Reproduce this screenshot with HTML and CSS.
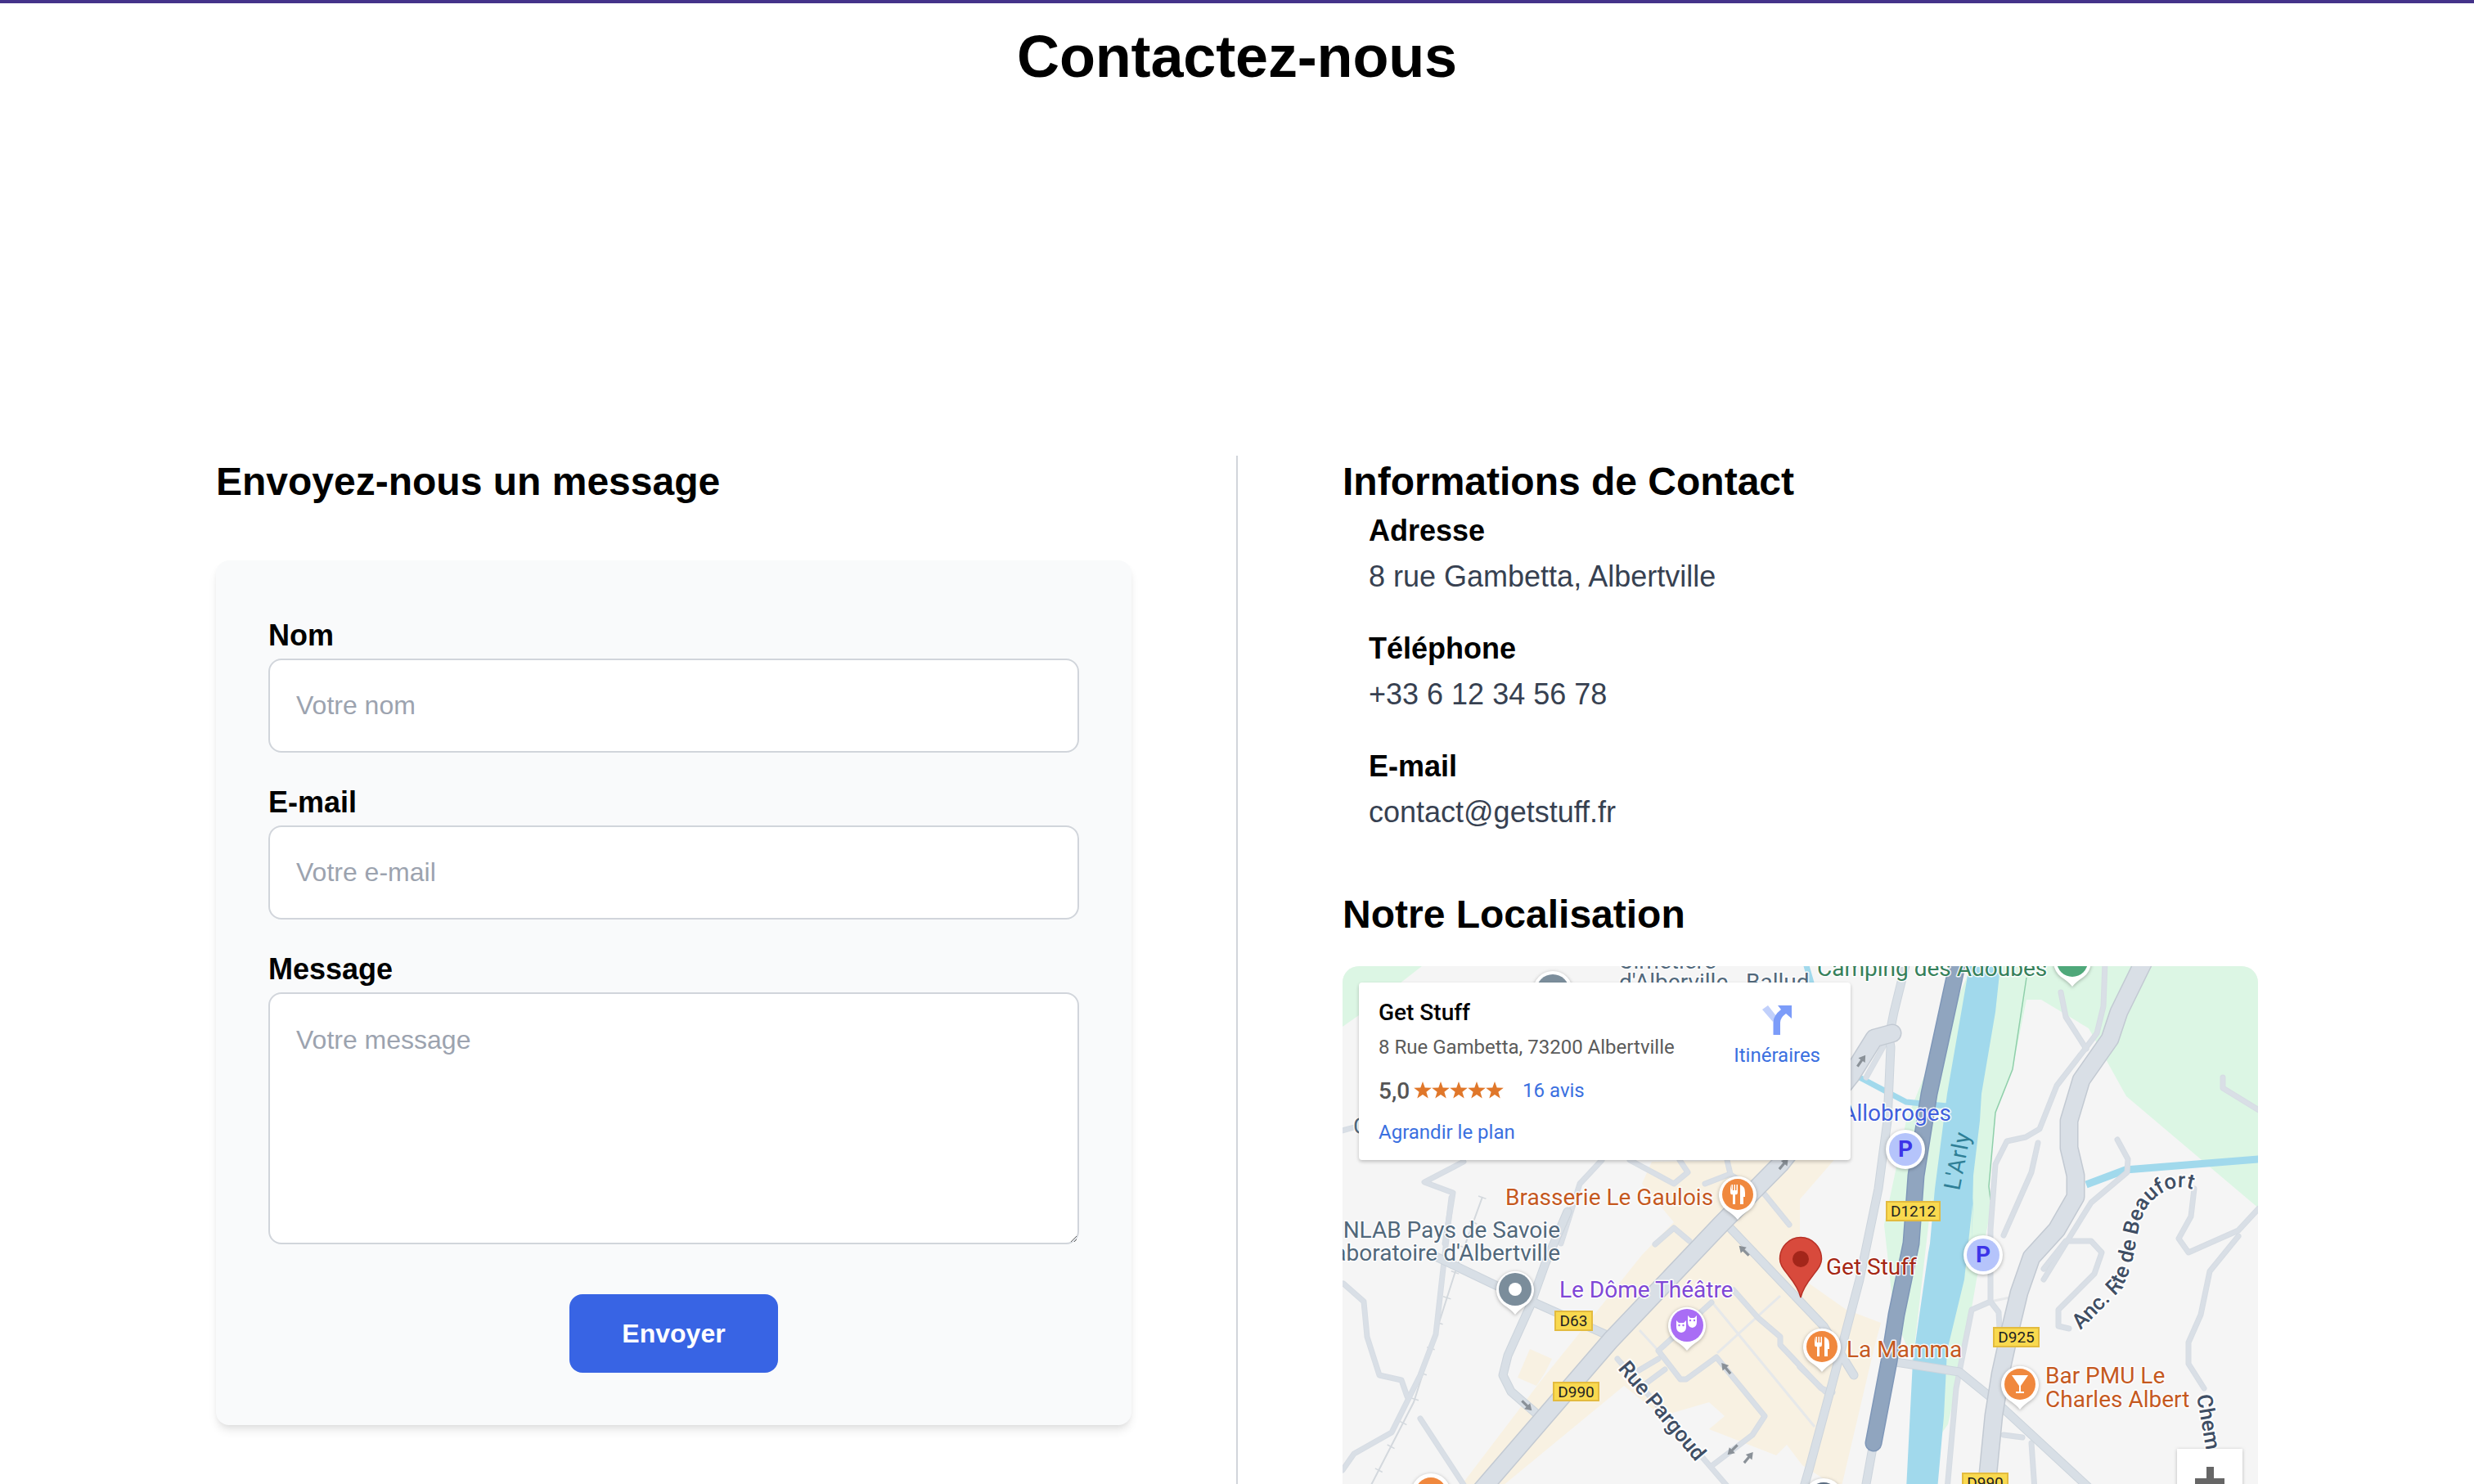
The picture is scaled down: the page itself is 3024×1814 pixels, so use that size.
FILE: index.html
```html
<!DOCTYPE html>
<html lang="fr">
<head>
<meta charset="utf-8">
<title>Contactez-nous</title>
<link rel="stylesheet" href="styles.css">
</head>
<body>
<main class="page">
  <h1 class="title">Contactez-nous</h1>
  <div class="columns">
    <section class="col">
      <h2 class="heading heading-form">Envoyez-nous un message</h2>
      <form class="card">
        <label class="label" for="nom">Nom</label>
        <input class="field" id="nom" type="text" placeholder="Votre nom">
        <label class="label" for="mail">E-mail</label>
        <input class="field" id="mail" type="email" placeholder="Votre e-mail">
        <label class="label" for="msg">Message</label>
        <textarea class="field area" id="msg" placeholder="Votre message"></textarea>
        <div class="actions"><button class="send" type="button">Envoyer</button></div>
      </form>
    </section>
    <div class="divider"></div>
    <section class="col">
      <h2 class="heading">Informations de Contact</h2>
      <dl class="details">
        <dt>Adresse</dt><dd>8 rue Gambetta, Albertville</dd>
        <dt>Téléphone</dt><dd>+33 6 12 34 56 78</dd>
        <dt>E-mail</dt><dd>contact@getstuff.fr</dd>
      </dl>
      <h2 class="heading heading-map">Notre Localisation</h2>
      <div class="map">
        <svg class="map-art" viewBox="0 0 1120 900" width="1120" height="900" xmlns="http://www.w3.org/2000/svg">
          <defs>
            <g id="mains">
              <path d="M979 -5L949 56 938 89 903 139 888 189 888 222 896 256 896 282 873 322 842 356 827 399 815 449 804 499 796 549 787 640"/>
              <path d="M170 640L328 457 462 316 535 242 622 133 650 88 672 82"/>
            </g>
            <g id="seconds">
              <path d="M114 355L187 390 328 453"/>
              <path d="M689 -5L674 56 668 86 670 99 666 189 655 272 632 383 597 516 570 616 563 640"/>
              <path d="M470 316L588 440 625 500"/>
              <path d="M670 483L754 496 796 530 915 640"/>
              <path d="M229 416L202 476 196 500 206 520 244 553"/>
              <path d="M275 300L248 363 229 416"/>
              <path d="M640 633L649 583"/>
            </g>
            <g id="minors">
              <path d="M1 388L26 410 30 453 45 500 72 506 79 526"/>
              <path d="M133 283L129 316 114 450 95 500 60 570 14 596 0 616"/>
              <path d="M95 553L152 640"/>
              <path d="M148 239L100 264 135 277 125 339"/>
              <path d="M317 237L290 266 267 339"/>
              <path d="M351 237L405 266 422 252 412 237"/>
              <path d="M443 266L474 254 470 237"/>
              <path d="M476 256L516 279 546 316"/>
              <path d="M382 340L405 320 424 336"/>
              <path d="M451 411L386 470 413 505 420 505 457 478 516 550 501 573 451 611"/>
              <path d="M359 496L386 480"/>
              <path d="M371 510L394 493"/>
              <path d="M336 480L474 640"/>
              <path d="M478 396L508 430 535 453 535 463 585 516 599 521"/>
              <path d="M559 490L590 520"/>
              <path d="M932 -5L930 49 922 82 907 102 873 146 852 199 835 209 812 214 798 242 792 322 792 410 769 420 750 516 739 640"/>
              <path d="M792 410L802 423 804 463"/>
              <path d="M878 32L884 62 909 101"/>
              <path d="M850 216L842 252 808 329"/>
              <path d="M947 212L960 236 959 252 915 289 892 326 857 383"/>
              <path d="M857 370L884 336 915 336 928 350 919 376 875 420 875 440 888 443"/>
              <path d="M1076 136L1076 149 1120 176"/>
              <path d="M1041 272L1037 306 1022 333 1034 350 1095 323 1120 296"/>
              <path d="M1095 330L1060 373 1049 426 1034 460 1034 486 1053 516"/>
              <path d="M808 573L831 576"/>
              <path d="M842 583L846 640"/>
              <path d="M0 201L14 197"/>
              <path d="M640 136L668 86"/>
            </g>
            <path id="pin-base" d="M0 31C-3 27-8 23-14 19A23 23 0 1 1 14 19C8 23 3 27 0 31Z"/>
            <g id="cutlery">
              <path d="M-9-12V-3Q-9 1-6-0V12H-3V0Q0 1 0-3V-12H-1.5V-5H-3V-12H-4.5V-5H-6V-12H-7.5V-5Z"/>
              <path d="M3-12Q9-10 9-2V3H7V12H3Z"/>
            </g>
            <path id="arrow" d="M0-9L5-1H1.6V8H-1.6V-1H-5Z"/>
            <path id="beaufort-line" d="M902 445L950 397C975 357 965 322 985 292 1000 274 1020 265 1042 274"/>
          </defs>

          <rect class="land" width="1120" height="900"/>
          <path class="green" d="M0 0H97L20 60 0 74Z"/>
          <path class="green" d="M769 0H1120V296L958 159 912 76 854 41 836 41 819 126 798 179 790 269 792 300 775 383 760 470 740 560 733 570 739 470 720 283 697 483 674 426 662 316 689 189 716 122Z"/>
          <path class="beige" d="M141 640L240 510 286 453 366 353 405 313 366 266 378 239 562 237 605 232 559 285 559 380 616 420 658 436 649 470 609 640 562 610 543 585 530 598 448 566 467 550 448 533 390 550 344 513 190 640Z"/>
          <path class="beige" d="M229 468L256 480 248 496 237 513 214 503Z"/>
          <path class="river" d="M766 0H804L798 56 781 156 779 189 771 256 769 339 771 283 760 383 739 470 735 550 727 640H689L697 483 716 350 718 339 724 272 739 156Z"/>
          <path class="creek" d="M1120 236L957 249 909 267"/>
          <path class="creek creek-thin" d="M632 136L689 166 739 171"/>
          <path class="creek creek-thin" d="M566 -4L574 24"/>
          <path class="trail" d="M836 14L819 126 798 179 790 269 792 286"/>

          <path class="rail" d="M171 282L137 376 87 533 32 640"/>
          <path class="rail-ties" d="M171 282L137 376 87 533 32 640"/>
          <g class="pedestrian">
            <path d="M363 445L386 470"/>
            <path d="M451 410L577 563"/>
            <path d="M458 473L535 403"/>
            <path d="M792 410L825 403"/>
          </g>

          <use href="#minors" class="road-case minor-case"/>
          <use href="#minors" class="road-fill minor-fill"/>
          <use href="#seconds" class="road-case second-case"/>
          <use href="#seconds" class="road-fill second-fill"/>
          <path class="rail-line-case" d="M752 -5L717 156 701 256 695 339 677 426 668 483 649 583"/>
          <path class="rail-line" d="M752 -5L717 156 701 256 695 339 677 426 668 483 649 583"/>
          <use href="#mains" class="road-case main-case"/>
          <use href="#mains" class="road-fill main-fill"/>

          <g class="one-way">
            <use href="#arrow" transform="translate(539 242) rotate(40)"/>
            <use href="#arrow" transform="translate(634 116) rotate(35)"/>
            <use href="#arrow" transform="translate(491 348) rotate(-45)"/>
            <use href="#arrow" transform="translate(225 537) rotate(135)"/>
            <use href="#arrow" transform="translate(469 492) rotate(-40)"/>
            <use href="#arrow" transform="translate(477 591) rotate(-135)"/>
            <use href="#arrow" transform="translate(496 601) rotate(40)"/>
          </g>

          <g class="shield">
            <rect x="665" y="288" width="65" height="23"/><text x="697.5" y="306">D1212</text>
            <rect x="260" y="422" width="45" height="23"/><text x="282.5" y="440">D63</text>
            <rect x="258" y="509" width="55" height="22"/><text x="285.5" y="527">D990</text>
            <rect x="796" y="442" width="55" height="23"/><text x="823.5" y="460">D925</text>
            <rect x="758" y="620" width="55" height="23"/><text x="785.5" y="638">D990</text>
          </g>

          <g class="labels">
            <text class="lb-grey" x="397" y="3" text-anchor="middle">Cimetière</text>
            <text class="lb-grey" x="338" y="29">d'Alberville</text>
            <text class="lb-grey" x="493" y="29">Ballud</text>
            <text class="lb-green" x="580" y="12">Camping des Adoubes</text>
            <text class="lb-grey" x="13" y="205">C</text>
            <text class="lb-grey" x="266" y="332" text-anchor="end">NLAB Pays de Savoie</text>
            <text class="lb-grey" x="266" y="360" text-anchor="end">Laboratoire d'Albertville</text>
            <text class="lb-orange" x="199" y="292">Brasserie Le Gaulois</text>
            <text class="lb-purple" x="265" y="405">Le Dôme Théâtre</text>
            <text class="lb-red" x="591" y="377">Get Stuff</text>
            <text class="lb-orange" x="616" y="478">La Mamma</text>
            <text class="lb-orange" x="859" y="510">Bar PMU Le</text>
            <text class="lb-orange" x="859" y="539">Charles Albert</text>
            <text class="lb-blue" x="744" y="189" text-anchor="end">Allobroges</text>
            <text class="lb-water" transform="translate(754 275) rotate(-79)">L'Arly</text>
            <text class="lb-road" transform="translate(336 492) rotate(50)">Rue Pargoud</text>
            <text class="lb-road"><textPath href="#beaufort-line">Anc. Rte de Beaufort</textPath></text>
            <text class="lb-road" transform="translate(1044 525) rotate(80)">Chem</text>
          </g>

          <g class="pins">
            <circle class="pin-white" cx="257" cy="30" r="24"/><circle class="pin-grey" cx="257" cy="30" r="20"/>
            <g transform="translate(892 -6)"><use href="#pin-base" class="pin-white"/><circle class="pin-green" r="19"/></g>
            <g transform="translate(483 279)"><use href="#pin-base" class="pin-white"/><circle class="pin-orange" r="19"/><use href="#cutlery" class="pin-glyph"/></g>
            <g transform="translate(211 395)"><use href="#pin-base" class="pin-white"/><circle class="pin-grey" r="20"/><circle class="pin-glyph" r="8"/></g>
            <g transform="translate(421 439)"><use href="#pin-base" class="pin-white"/><circle class="pin-purple" r="20"/>
              <path class="pin-glyph" d="M-13-6L-10-3H-4L-1-6V2Q-1 8-7 9-13 8-13 2Z"/>
              <path class="pin-glyph" d="M1-12L4-9H9L12-12V-4Q12 2 6.500 3 1 2 1-4Z"/>
              <circle class="pin-purple" cx="-9.500" cy="0" r="1.200"/><circle class="pin-purple" cx="-4.500" cy="0" r="1.200"/>
              <circle class="pin-purple" cx="4" cy="-6" r="1.200"/><circle class="pin-purple" cx="9" cy="-6" r="1.200"/>
            </g>
            <g transform="translate(586 465)"><use href="#pin-base" class="pin-white"/><circle class="pin-orange" r="19"/><use href="#cutlery" class="pin-glyph"/></g>
            <g transform="translate(828 511)"><use href="#pin-base" class="pin-white"/><circle class="pin-orange" r="19"/>
              <path class="pin-glyph" d="M-10-11H10L1 2V9H5V11H-5V9H-1V2Z"/>
            </g>
            <g transform="translate(688 224)"><circle class="pin-white" r="24"/><circle class="pin-park" r="20"/><text class="park-text" y="9">P</text></g>
            <g transform="translate(783 353)"><circle class="pin-white" r="24"/><circle class="pin-park" r="20"/><text class="park-text" y="9">P</text></g>
            <circle class="pin-white" cx="108" cy="644" r="24"/><circle class="pin-orange" cx="108" cy="644" r="19"/>
            <circle class="pin-white" cx="588" cy="650" r="24"/><circle class="pin-dark" cx="588" cy="650" r="19"/>
            <g transform="translate(560 358)">
              <path class="marker" d="M0 47C-2 38-7 30-15 20-21 12-25.500 7-25.500 0A25.500 26.500 0 0 1 25.500 0C25.500 7 21 12 15 20 7 30 2 38 0 47Z"/>
              <circle class="marker-dot" r="10"/>
            </g>
          </g>

          <rect class="zoom-box" x="1020" y="590" width="80" height="80"/>
          <path class="zoom-plus" d="M1056 612H1065V626H1078V635H1065V649H1056V635H1042V626H1056Z"/>
        </svg>

        <div class="place">
          <div class="place-main">
            <div class="place-name">Get Stuff</div>
            <div class="place-address">8 Rue Gambetta, 73200 Albertville</div>
            <div class="place-rating">
              <span class="score">5,0</span>
              <svg class="stars" viewBox="0 0 110 22" width="110" height="22" aria-hidden="true">
                <defs><path id="star" d="M11 0L13.700 7.600 21.800 7.800 15.400 12.800 17.700 20.600 11 16 4.300 20.600 6.600 12.800 .2 7.800 8.300 7.600Z"/></defs>
                <use href="#star"/><use href="#star" x="22"/><use href="#star" x="44"/><use href="#star" x="66"/><use href="#star" x="88"/>
              </svg>
              <a class="link reviews">16 avis</a>
            </div>
            <a class="link enlarge">Agrandir le plan</a>
          </div>
          <div class="directions">
            <svg viewBox="0 0 36 36" width="36" height="36" aria-hidden="true">
              <path class="dir-light" d="M0 5L7 0 18 14 13 20Z"/>
              <path class="dir-dark" d="M13.500 36V20Q14 12 23 5L19 0H36V16L29 10Q22 15 22 21V36Z"/>
            </svg>
            <a class="link">Itinéraires</a>
          </div>
        </div>
      </div>
    </section>
  </div>
</main>
</body>
</html>
```

FILE: styles.css
```css
* { box-sizing: border-box; }
html, body { height: 100%; margin: 0; overflow: hidden; background: #fff; }
body { font-family: "Liberation Sans", Arial, sans-serif; color: #000; }

.page {
  height: 100%;
  border-top: 4px solid #44338a;
  padding: 0 264px;
}
.title {
  margin: 0;
  height: 553px;
  padding-top: 25px;
  font-size: 72px;
  line-height: 80px;
  font-weight: 700;
  letter-spacing: -.15px;
  text-align: center;
}

.columns {
  display: grid;
  grid-template-columns: 1119px 2px 1119px;
  column-gap: 128px;
  height: 1300px;
}
.divider { background: #d1d5db; }

.heading { margin: 0; font-size: 48px; line-height: 64px; font-weight: 700; }
.heading-form { margin-bottom: 64px; }
.heading-map { margin-top: 65px; margin-bottom: 31px; }

.card {
  background: #f9fafb;
  border-radius: 16px;
  padding: 64px;
  box-shadow: 0 8px 12px -2px rgba(0, 0, 0, .1), 0 3px 6px -2px rgba(0, 0, 0, .06);
}
.label { display: block; font-size: 36px; line-height: 56px; font-weight: 700; }
.field {
  display: block;
  width: 100%;
  height: 115px;
  margin-bottom: 33px;
  padding: 0 32px;
  border: 2px solid #d1d5db;
  border-radius: 16px;
  background: #fff;
  font-family: inherit;
  font-size: 32px;
  color: #111827;
}
.field::placeholder { color: #9ca3af; opacity: 1; }
.area { height: 308px; padding: 32px; line-height: 48px; margin-bottom: 61px; resize: vertical; }
.actions { display: flex; justify-content: center; }
.send {
  width: 255px;
  height: 96px;
  border: 0;
  border-radius: 16px;
  background: #3864e4;
  color: #fff;
  font-family: inherit;
  font-size: 32px;
  font-weight: 700;
}

.details { margin: 0; padding: 0 32px; }
.details dt { font-size: 36px; line-height: 56px; font-weight: 700; }
.details dd { margin: 0 0 32px; font-size: 36px; line-height: 56px; color: #374151; }
.details dd:last-child { margin-bottom: 0; }

.map {
  position: relative;
  width: 1119px;
  height: 900px;
  border-radius: 20px;
  overflow: hidden;
  font-family: Roboto, "Liberation Sans", sans-serif;
}
.map-art { display: block; }
.land { fill: #f5f5f5; }
.green { fill: #dcf6e4; }
.beige { fill: #f8f1e2; }
.river { fill: #a1d9ec; }
.creek { fill: none; stroke: #a1d9ec; stroke-width: 9; }
.creek-thin { stroke-width: 7; }
.trail { fill: none; stroke: #8fcfaa; stroke-width: 1.500; }
.rail { fill: none; stroke: #d3d8dd; stroke-width: 2; }
.rail-ties { fill: none; stroke: #d3d8dd; stroke-width: 10; stroke-dasharray: 1.500 31; }
.pedestrian { fill: none; stroke: #e6e8ea; stroke-width: 3; }

.road-case, .road-fill { fill: none; stroke-linejoin: round; stroke-linecap: round; }
.minor-case { stroke: #d6dce3; stroke-width: 7; }
.minor-fill { stroke: #d9dfe6; stroke-width: 5; }
.second-case { stroke: #ccd4dc; stroke-width: 11; }
.second-fill { stroke: #d8dfe6; stroke-width: 9; }
.main-case { stroke: #c2c9d2; stroke-width: 23; }
.main-fill { stroke: #d9dfe6; stroke-width: 20; }
.rail-line-case { fill: none; stroke: #7f97b8; stroke-width: 21; stroke-linejoin: round; stroke-linecap: round; }
.rail-line { fill: none; stroke: #90a5bf; stroke-width: 18; stroke-linejoin: round; stroke-linecap: round; }
.one-way { fill: #8a9198; }

.shield rect { fill: #f9d94f; stroke: #e3bb3f; stroke-width: 2; }
.shield text { font-size: 19px; fill: #222; text-anchor: middle; }

.labels text {
  font-size: 28px;
  paint-order: stroke;
  stroke: rgba(255, 255, 255, .9);
  stroke-width: 3px;
  stroke-linejoin: round;
}
.lb-grey { fill: #51687b; }
.lb-green { fill: #35805a; }
.lb-orange { fill: #c5591f; }
.lb-purple { fill: #7f47d6; }
.lb-red { fill: #a52714; }
.lb-blue { fill: #3f5fdc; }
.labels .lb-water { fill: #2f7f96; font-size: 28px; letter-spacing: 1px; stroke-width: 0; }
.labels .lb-road { fill: #3f4e64; font-size: 26px; font-weight: 500; stroke-width: 4px; }

.pins use, .pins circle { stroke: none; }
.pin-white { fill: #fff; filter: drop-shadow(0 1px 2px rgba(0, 0, 0, .3)); }
.pin-orange { fill: #f0883e; }
.pin-grey { fill: #7b8d9b; }
.pin-green { fill: #4fa87a; }
.pin-purple { fill: #a96df5; }
.pin-park { fill: #b5c4fb; }
.pin-dark { fill: #5a6c80; }
.pin-glyph { fill: #fff; }
.park-text { font-size: 28px; font-weight: 700; fill: #3d35e8; text-anchor: middle; }
.marker { fill: #d84a3c; stroke: #b83126; stroke-width: 1.500; }
.marker-dot { fill: #a3261a; }
.zoom-box { fill: #fff; filter: drop-shadow(0 1px 2px rgba(0, 0, 0, .25)); }
.zoom-plus { fill: #666; }

.place {
  position: absolute;
  left: 20px;
  top: 20px;
  width: 601px;
  height: 217px;
  padding: 20px 37px 0 24px;
  display: flex;
  justify-content: space-between;
  background: #fff;
  border-radius: 4px;
  box-shadow: 0 2px 4px rgba(0, 0, 0, .22);
}
.place-main { display: flex; flex-direction: column; }
.place-name { font-size: 28px; line-height: 34px; font-weight: 500; color: #000; }
.place-address { margin-top: 9px; font-size: 24px; line-height: 32px; color: #5b5b5b; }
.place-rating { margin-top: 19px; display: flex; align-items: center; height: 36px; }
.score { font-size: 28px; font-weight: 500; color: #555; }
.stars { margin-left: 5px; fill: #e0772a; }
.link { font-size: 24px; line-height: 32px; color: #3a6fe0; }
.reviews { margin-left: 23px; }
.enlarge { margin-top: 17px; }
.directions { display: flex; flex-direction: column; align-items: center; padding-top: 8px; }
.directions .link { margin-top: 9px; }
.dir-light { fill: #c1d0fb; }
.dir-dark { fill: #7c9cf9; }
```
